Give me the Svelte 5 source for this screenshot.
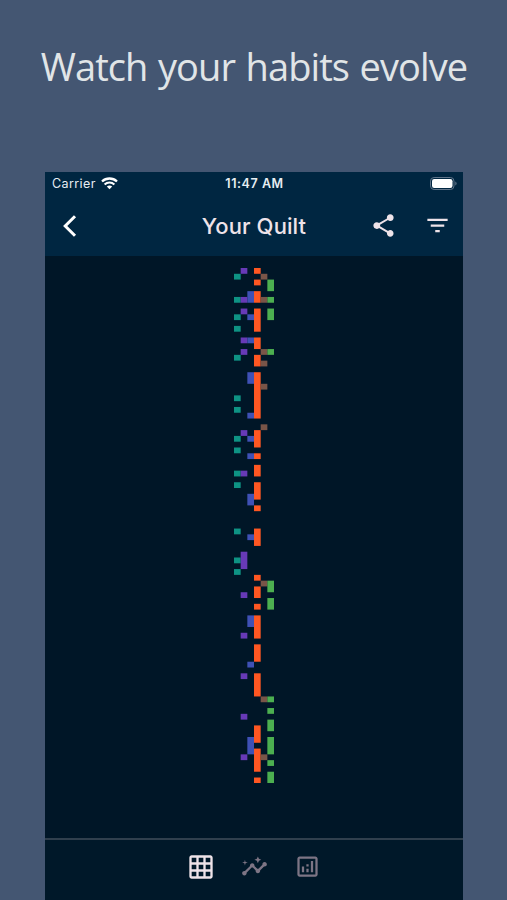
<script lang="ts">
  // One entry per habit: [first day, number of days] for every streak
  const habits = [
    {
      color: '#0e9384',
      runs: [[1, 1], [5, 1], [8, 1], [10, 1], [15, 1], [22, 1], [24, 1], [29, 1], [31, 1], [35, 1], [37, 1], [45, 1], [50, 1], [52, 1]],
    },
    {
      color: '#673ab7',
      runs: [[0, 1], [5, 1], [7, 1], [12, 1], [14, 1], [28, 1], [35, 1], [49, 3], [56, 1], [63, 1], [70, 1], [77, 1], [84, 1]],
    },
    {
      color: '#3f51b5',
      runs: [[4, 2], [8, 1], [12, 1], [18, 2], [25, 1], [29, 1], [32, 1], [39, 2], [46, 1], [60, 2], [68, 1], [81, 3]],
    },
    {
      color: '#ff5722',
      runs: [[0, 1], [2, 1], [4, 2], [7, 4], [12, 2], [15, 2], [18, 8], [28, 3], [32, 1], [34, 2], [37, 3], [41, 1], [45, 3], [53, 1], [55, 2], [58, 1], [60, 4], [65, 3], [70, 4], [79, 3], [83, 4], [88, 1]],
    },
    {
      color: '#795548',
      runs: [[1, 1], [5, 1], [14, 1], [16, 1], [20, 1], [27, 1], [54, 1], [74, 1], [84, 1]],
    },
    {
      color: '#4caf50',
      runs: [[2, 2], [5, 1], [7, 2], [14, 1], [54, 2], [57, 2], [74, 1], [76, 1], [78, 2], [81, 3], [85, 1], [87, 2]],
    },
  ];

  const cellWidth = 6.67;
  const cellHeight = 5.79;
  const days = 89;
</script>

<main class="page">
  <h1>Watch your habits evolve</h1>

  <section class="phone">
    <header>
      <div class="status">
        <div class="carrier">
          <span>Carrier</span>
          <svg width="17" height="13" viewBox="0 0 17 13" fill="none" stroke="#fff">
            <path d="M1 4.5C5.2 .5 11.8 .5 16 4.5" stroke-width="2.3" />
            <path d="M3.6 7.5C6.4 4.9 10.6 4.9 13.4 7.5" stroke-width="2.1" />
            <path d="M5.8 9.5C7.4 8.1 9.6 8.1 11.2 9.5L8.5 12.3Z" fill="#fff" stroke="none" />
          </svg>
        </div>
        <span class="time">11:47 AM</span>
        <svg class="battery" width="27" height="13" viewBox="0 0 27 13">
          <rect x=".5" y=".5" width="23.5" height="12" rx="3.6" fill="none" stroke="#60758a" />
          <rect x="2" y="2" width="20.5" height="9" rx="2.2" fill="#fff" />
          <path d="M25.3 4.4q1.3.6 1.3 2.1t-1.3 2.1z" fill="#60758a" />
        </svg>
      </div>

      <div class="toolbar">
        <button class="back" aria-label="Back">
          <svg width="16" height="24" viewBox="0 0 16 24" fill="none" stroke="#fff" stroke-width="3">
            <path d="M14 2.2L4.2 12l9.8 9.8" />
          </svg>
        </button>
        <h2>Your Quilt</h2>
        <button aria-label="Share">
          <svg width="27" height="27" viewBox="0 0 24 24" fill="#eee3e9">
            <path d="M18 16.08c-.76 0-1.44.3-1.96.77L8.91 12.7c.05-.23.09-.46.09-.7s-.04-.47-.09-.7l7.05-4.11c.54.5 1.25.81 2.04.81 1.66 0 3-1.34 3-3s-1.34-3-3-3-3 1.34-3 3c0 .24.04.47.09.7L8.04 9.81C7.5 9.31 6.79 9 6 9c-1.66 0-3 1.34-3 3s1.34 3 3 3c.79 0 1.5-.31 2.04-.81l7.12 4.16c-.05.21-.08.43-.08.65 0 1.61 1.31 2.92 2.92 2.92s2.92-1.31 2.92-2.92-1.31-2.92-2.92-2.92z" />
          </svg>
        </button>
        <button aria-label="Filter">
          <svg width="27" height="27" viewBox="0 0 24 24" fill="#eee3e9">
            <path d="M10 18h4v-2h-4v2zM3 6v2h18V6H3zm3 7h12v-2H6v2z" />
          </svg>
        </button>
      </div>
    </header>

    <div class="quilt">
      <svg width={habits.length * cellWidth} height={days * cellHeight}>
        {#each habits as habit, col}
          {#each habit.runs as [start, length]}
            <rect
              x={col * cellWidth}
              y={start * cellHeight}
              width={cellWidth}
              height={length * cellHeight}
              fill={habit.color}
            />
          {/each}
        {/each}
      </svg>
    </div>

    <nav>
      <button aria-label="Quilt">
        <svg width="28" height="28" viewBox="0 0 24 24" fill="#eee3e9">
          <path fill-rule="evenodd" d="M20 2H4c-1.1 0-2 .9-2 2v16c0 1.1.9 2 2 2h16c1.1 0 2-.9 2-2V4c0-1.1-.9-2-2-2zM8 20H4v-4h4v4zm0-6H4v-4h4v4zm0-6H4V4h4v4zm6 12h-4v-4h4v4zm0-6h-4v-4h4v4zm0-6h-4V4h4v4zm6 12h-4v-4h4v4zm0-6h-4v-4h4v4zm0-6h-4V4h4v4z" />
        </svg>
      </button>
      <button aria-label="Insights">
        <svg width="27" height="27" viewBox="0 0 24 24" fill="#7d7585">
          <path d="M21 8c-1.45 0-2.26 1.44-1.93 2.51l-3.55 3.56c-.3-.09-.74-.09-1.04 0l-2.55-2.55C12.27 10.45 11.46 9 10 9c-1.45 0-2.27 1.44-1.93 2.52l-4.56 4.55C2.44 15.74 1 16.55 1 18c0 1.1.9 2 2 2 1.45 0 2.26-1.44 1.93-2.51l4.55-4.56c.3.09.74.09 1.04 0l2.55 2.55C12.73 16.55 13.54 18 15 18c1.45 0 2.27-1.44 1.93-2.52l3.56-3.55C21.56 12.26 23 11.45 23 10c0-1.1-.9-2-2-2z" />
          <path d="M15 9l.94-2.07L18 6l-2.06-.93L15 3l-.92 2.07L12 6l2.08.93zM3.5 11L4 9l2-.5L4 8l-.5-2L3 8l-2 .5L3 9z" />
        </svg>
      </button>
      <button aria-label="Statistics">
        <svg width="27" height="27" viewBox="0 0 24 24" fill="#7d7585">
          <path fill-rule="evenodd" d="M19 3H5c-1.1 0-2 .9-2 2v14c0 1.1.9 2 2 2h14c1.1 0 2-.9 2-2V5c0-1.1-.9-2-2-2zm0 16H5V5h14v14z" />
          <path d="M7 12h2v5H7zM15 7h2v10h-2zM11 14h2v3h-2zM11 10h2v2h-2z" />
        </svg>
      </button>
    </nav>
  </section>
</main>

<style>
  :global(body) { background: #445672; }

  .page {
    box-sizing: border-box;
    height: 900px;
    display: flex;
    flex-direction: column;
    align-items: center;
    overflow: hidden;
    padding-left: 1px;
    background: #445672;
    font-family: Inter, "Liberation Sans", sans-serif;
  }

  h1 {
    box-sizing: border-box;
    height: 172px;
    margin: 0;
    padding-top: 39px;
    font: 400 38px/54px "Open Sans", "Noto Sans", sans-serif;
    letter-spacing: -0.9px;
    word-spacing: 1.5px;
    white-space: nowrap;
    color: #e1e5e7;
  }

  .phone {
    width: 418px;
    flex: 1;
    display: flex;
    flex-direction: column;
    background: #001627;
  }

  header {
    height: 84px;
    background: #002641;
  }

  .status {
    height: 23px;
    display: grid;
    grid-template-columns: 1fr auto 1fr;
    align-items: center;
    padding: 0 6px 0 7px;
    font-size: 12.5px;
    color: #e7edf2;
  }
  .carrier { display: flex; align-items: center; gap: 5px; letter-spacing: 0.4px; }
  .time { font-weight: 600; letter-spacing: 0.55px; }
  .battery { justify-self: end; }

  .toolbar {
    height: 61px;
    display: grid;
    grid-template-columns: 118px 182px 76px 32px;
    align-items: center;
  }
  h2 {
    margin: 0;
    text-align: center;
    font-size: 22px;
    font-weight: 500;
    letter-spacing: 0.1px;
    color: #eee3e9;
  }

  button {
    display: flex;
    justify-content: center;
    padding: 0;
    border: 0;
    background: none;
  }
  .back { justify-content: flex-start; padding-left: 16px; }

  .quilt {
    height: 570px;
    padding-top: 12px;
    display: flex;
    justify-content: center;
  }
  .quilt svg { display: block; }

  nav {
    flex: 1;
    display: flex;
    align-items: flex-start;
    justify-content: center;
    gap: 26px;
    padding: 13px 1px 0 0;
    border-top: 2px solid #303f4d;
    background: #001829;
  }
</style>
